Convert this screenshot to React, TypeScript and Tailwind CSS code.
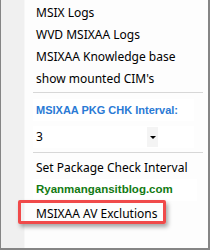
import React from 'react';

const items = ['MSIX Logs', 'WVD MSIXAA Logs', 'MSIXAA Knowledge base', "show mounted CIM's"];

export default function App() {
  return (
    <div className="relative w-[210px] h-[250px] flex bg-[#fdfdfd] border-l border-r-2 border-b-2 border-[#858585] font-['Segoe_UI','Noto_Sans',sans-serif] text-[12px] text-black overflow-hidden">
      {/* icon gutter */}
      <div className="w-[24px] shrink-0 bg-[#f0f0f0] border-r border-[#f7f7f7]" />

      <div className="flex-1 flex flex-col pt-[2px]">
        {items.map(label => (
          <div key={label} className="h-[22px] flex items-center pl-[11px]">{label}</div>
        ))}

        <div className="h-[5px] flex items-center pl-[8px] pr-[5px]">
          <div className="h-px w-full bg-[#d7d7d7]" />
        </div>

        <div className="mt-[4px] h-[22px] mx-[8px] mr-[14px] bg-white flex items-center pl-[3px] font-bold font-['Liberation_Sans',Arial,sans-serif] text-[11px] text-[#2a7ad5]">
          MSIXAA PKG CHK Interval:
        </div>

        {/* combo */}
        <div className="mt-[5px] h-[22px] mx-[8px] mr-[14px] bg-white flex items-center pl-[3px]">
          <span className="flex-1">3</span>
          <div className="w-[11px] h-[20px] bg-[#f4f4f4] flex items-center justify-center mr-[36px]">
            <svg width="6" height="3" viewBox="0 0 6 3"><path d="M0 0h6L3 3z" fill="#000" /></svg>
          </div>
        </div>

        <div className="h-[9px] flex items-center pl-[8px] pr-[5px]">
          <div className="h-px w-full bg-[#d7d7d7]" />
        </div>

        <div className="h-[22px] flex items-center pl-[11px]">Set Package Check Interval</div>
        <div className="h-[22px] mx-[8px] mr-[11px] bg-white flex items-center pl-[3px] font-bold font-['Liberation_Sans',Arial,sans-serif] text-[11.5px] text-[#127a12]">
          Ryanmangansitblog.com
        </div>
        <div className="mt-[2px] h-[22px] flex items-center pl-[11px]">MSIXAA AV Exclutions</div>
      </div>

      {/* annotation box */}
      <div className="absolute left-[17px] top-[200px] w-[148px] h-[24px] border-[3px] border-[#f04a4a] rounded-[2px] shadow-[2px_3px_4px_rgba(0,0,0,0.35)]" />
    </div>
  );
}
